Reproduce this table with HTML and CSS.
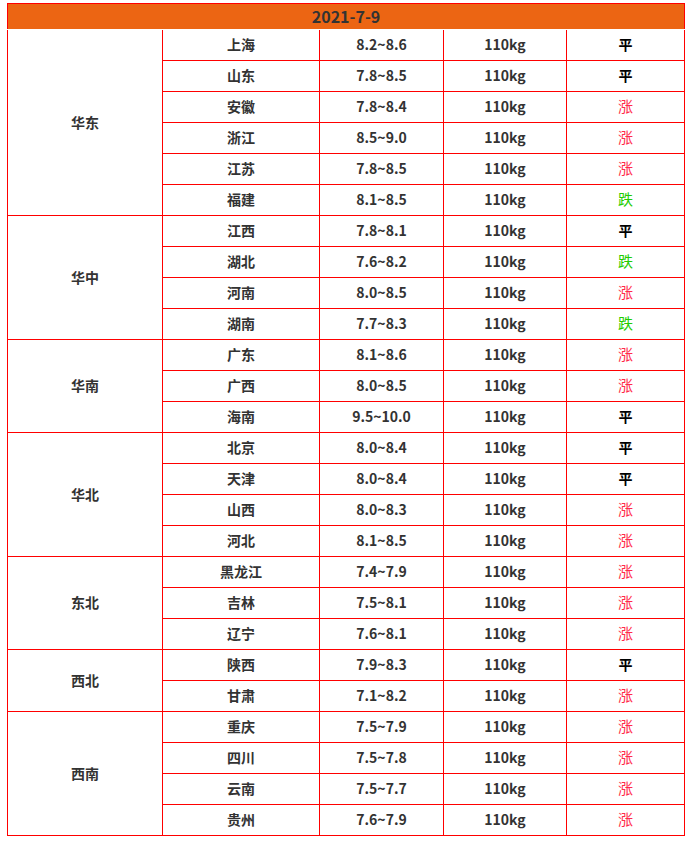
FILE: index.html
```html
<!DOCTYPE html>
<html lang="zh">
<head>
<meta charset="utf-8">
<link rel="stylesheet" href="styles.css">
</head>
<body>
<table class="price">
<colgroup><col class="c1"><col class="c2"><col class="c3"><col class="c4"><col class="c5"></colgroup>
<thead><tr><th colspan="5" class="head">2021-7-9</th></tr></thead>
<tbody>
<tr><td rowspan="6" class="region">华东</td><td>上海</td><td>8.2~8.6</td><td>110kg</td><td class="ping">平</td></tr>
<tr><td>山东</td><td>7.8~8.5</td><td>110kg</td><td class="ping">平</td></tr>
<tr><td>安徽</td><td>7.8~8.4</td><td>110kg</td><td class="zhang">涨</td></tr>
<tr><td>浙江</td><td>8.5~9.0</td><td>110kg</td><td class="zhang">涨</td></tr>
<tr><td>江苏</td><td>7.8~8.5</td><td>110kg</td><td class="zhang">涨</td></tr>
<tr><td>福建</td><td>8.1~8.5</td><td>110kg</td><td class="die">跌</td></tr>
<tr><td rowspan="4" class="region">华中</td><td>江西</td><td>7.8~8.1</td><td>110kg</td><td class="ping">平</td></tr>
<tr><td>湖北</td><td>7.6~8.2</td><td>110kg</td><td class="die">跌</td></tr>
<tr><td>河南</td><td>8.0~8.5</td><td>110kg</td><td class="zhang">涨</td></tr>
<tr><td>湖南</td><td>7.7~8.3</td><td>110kg</td><td class="die">跌</td></tr>
<tr><td rowspan="3" class="region">华南</td><td>广东</td><td>8.1~8.6</td><td>110kg</td><td class="zhang">涨</td></tr>
<tr><td>广西</td><td>8.0~8.5</td><td>110kg</td><td class="zhang">涨</td></tr>
<tr><td>海南</td><td>9.5~10.0</td><td>110kg</td><td class="ping">平</td></tr>
<tr><td rowspan="4" class="region">华北</td><td>北京</td><td>8.0~8.4</td><td>110kg</td><td class="ping">平</td></tr>
<tr><td>天津</td><td>8.0~8.4</td><td>110kg</td><td class="ping">平</td></tr>
<tr><td>山西</td><td>8.0~8.3</td><td>110kg</td><td class="zhang">涨</td></tr>
<tr><td>河北</td><td>8.1~8.5</td><td>110kg</td><td class="zhang">涨</td></tr>
<tr><td rowspan="3" class="region">东北</td><td>黑龙江</td><td>7.4~7.9</td><td>110kg</td><td class="zhang">涨</td></tr>
<tr><td>吉林</td><td>7.5~8.1</td><td>110kg</td><td class="zhang">涨</td></tr>
<tr><td>辽宁</td><td>7.6~8.1</td><td>110kg</td><td class="zhang">涨</td></tr>
<tr><td rowspan="2" class="region">西北</td><td>陕西</td><td>7.9~8.3</td><td>110kg</td><td class="ping">平</td></tr>
<tr><td>甘肃</td><td>7.1~8.2</td><td>110kg</td><td class="zhang">涨</td></tr>
<tr><td rowspan="4" class="region">西南</td><td>重庆</td><td>7.5~7.9</td><td>110kg</td><td class="zhang">涨</td></tr>
<tr><td>四川</td><td>7.5~7.8</td><td>110kg</td><td class="zhang">涨</td></tr>
<tr><td>云南</td><td>7.5~7.7</td><td>110kg</td><td class="zhang">涨</td></tr>
<tr><td>贵州</td><td>7.6~7.9</td><td>110kg</td><td class="zhang">涨</td></tr>
</tbody>
</table>
</body>
</html>
```
FILE: styles.css
```css
html, body {
  margin: 0;
  padding: 0;
  background: #ffffff;
}
body {
  padding: 3px 6px 0 7px;
  font-family: "Noto Sans CJK SC", "Noto Sans", sans-serif;
  font-size: 14px;
  font-weight: bold;
  color: #333333;
}
.price {
  border-collapse: collapse;
  table-layout: fixed;
  width: 677px;
}
.c1 { width: 155px; }
.c2 { width: 157px; }
.c3 { width: 124px; }
.c4 { width: 123px; }
.c5 { width: 118px; }
.price th.head {
  height: 25px;
  padding: 0;
  background: #ec6513;
  color: #333333;
  font-size: 16px;
  font-weight: bold;
  text-align: center;
  border: 1px solid #ff0000;
  border-bottom: 1px solid #ffffff;
  line-height: 24px;
  vertical-align: top;
}
.price td {
  border: 1px solid #ff0000;
  height: 30px;
  padding: 0;
  text-align: center;
  line-height: 28px;
  vertical-align: top;
}
.price td.region {
  vertical-align: middle;
  line-height: 28px;
  padding-bottom: 2px;
}
.price tbody tr:first-child td {
  border-top: 1px solid #ffffff;
}
.ping { color: #000000; }
.zhang { color: #ff2b4a; font-weight: normal; font-size: 15px; }
.die { color: #22cc00; font-weight: normal; font-size: 15px; }
```
